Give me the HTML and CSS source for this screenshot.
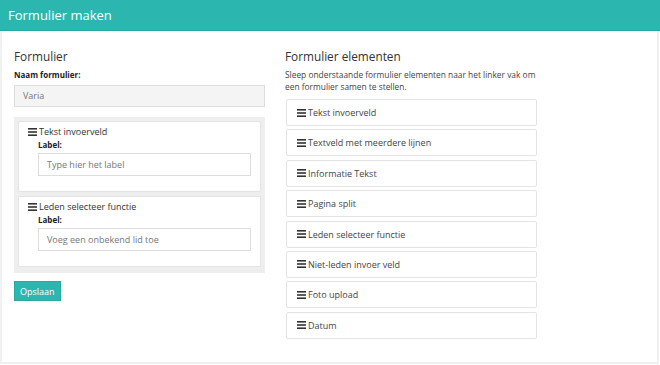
FILE: index.html
```html
<!DOCTYPE html>
<html lang="nl">
<head>
<meta charset="utf-8">
<title>Formulier maken</title>
<link rel="stylesheet" href="styles.css">
</head>
<body>
<header class="topbar">Formulier maken</header>
<main class="page">
  <section class="col">
    <h2 class="title">Formulier</h2>
    <label class="lbl">Naam formulier:</label>
    <div class="input input-gray">Varia</div>
    <div class="well">
      <div class="card">
        <div class="card-head"><svg class="bars" viewBox="0 0 9 8"><rect y="0" width="9" height="1.6"/><rect y="3.2" width="9" height="1.6"/><rect y="6.4" width="9" height="1.6"/></svg>Tekst invoerveld</div>
        <div class="card-body">
          <label class="lbl">Label:</label>
          <div class="input">Type hier het label</div>
        </div>
      </div>
      <div class="card">
        <div class="card-head"><svg class="bars" viewBox="0 0 9 8"><rect y="0" width="9" height="1.6"/><rect y="3.2" width="9" height="1.6"/><rect y="6.4" width="9" height="1.6"/></svg>Leden selecteer functie</div>
        <div class="card-body">
          <label class="lbl">Label:</label>
          <div class="input">Voeg een onbekend lid toe</div>
        </div>
      </div>
    </div>
    <button class="btn">Opslaan</button>
  </section>
  <section class="col">
    <h2 class="title">Formulier elementen</h2>
    <p class="desc">Sleep onderstaande formulier elementen naar het linker vak om een formulier samen te stellen.</p>
    <ul class="items">
      <li class="item"><svg class="bars" viewBox="0 0 9 8"><rect y="0" width="9" height="1.6"/><rect y="3.2" width="9" height="1.6"/><rect y="6.4" width="9" height="1.6"/></svg>Tekst invoerveld</li>
      <li class="item"><svg class="bars" viewBox="0 0 9 8"><rect y="0" width="9" height="1.6"/><rect y="3.2" width="9" height="1.6"/><rect y="6.4" width="9" height="1.6"/></svg>Textveld met meerdere lijnen</li>
      <li class="item"><svg class="bars" viewBox="0 0 9 8"><rect y="0" width="9" height="1.6"/><rect y="3.2" width="9" height="1.6"/><rect y="6.4" width="9" height="1.6"/></svg>Informatie Tekst</li>
      <li class="item"><svg class="bars" viewBox="0 0 9 8"><rect y="0" width="9" height="1.6"/><rect y="3.2" width="9" height="1.6"/><rect y="6.4" width="9" height="1.6"/></svg>Pagina split</li>
      <li class="item"><svg class="bars" viewBox="0 0 9 8"><rect y="0" width="9" height="1.6"/><rect y="3.2" width="9" height="1.6"/><rect y="6.4" width="9" height="1.6"/></svg>Leden selecteer functie</li>
      <li class="item"><svg class="bars" viewBox="0 0 9 8"><rect y="0" width="9" height="1.6"/><rect y="3.2" width="9" height="1.6"/><rect y="6.4" width="9" height="1.6"/></svg>Niet-leden invoer veld</li>
      <li class="item"><svg class="bars" viewBox="0 0 9 8"><rect y="0" width="9" height="1.6"/><rect y="3.2" width="9" height="1.6"/><rect y="6.4" width="9" height="1.6"/></svg>Foto upload</li>
      <li class="item"><svg class="bars" viewBox="0 0 9 8"><rect y="0" width="9" height="1.6"/><rect y="3.2" width="9" height="1.6"/><rect y="6.4" width="9" height="1.6"/></svg>Datum</li>
    </ul>
  </section>
</main>
</body>
</html>
```
FILE: styles.css
```css
* { box-sizing: border-box; }
html, body { margin: 0; padding: 0; background: #fff; }
body {
  font-family: "Open Sans", "Liberation Sans", sans-serif;
  color: #333;
  font-size: 9px;
  width: 660px;
  height: 365px;
}
.topbar {
  height: 31px;
  background: #2bb7af;
  border-bottom: 1px solid #27a8a0;
  color: #fff;
  font-size: 13px;
  line-height: 30px;
  padding-left: 8px;
}
.page {
  height: 333px;
  border: 2px solid #f0f0f0;
  border-top: none;
  margin-right: 1px;
  display: grid;
  grid-template-columns: 251px 252px;
  column-gap: 20px;
  padding: 0 0 0 12px;
}
.title {
  font-size: 11.8px;
  font-weight: 400;
  color: #333;
  margin: 16px 0 4px;
  line-height: 18px;
}
.lbl {
  display: block;
  font-weight: 700;
  font-size: 8px;
  line-height: 12px;
  color: #222;
  margin-bottom: 4px;
}
.input {
  height: 22px;
  border: 1px solid #ddd;
  background: #fff;
  color: #777;
  font-size: 9px;
  line-height: 20px;
  padding: 0 8px;
}
.input-gray { background: #f4f4f4; }
.well {
  margin-top: 10px;
  background: #eee;
  padding: 4px 4px 6px;
  display: flex;
  flex-direction: column;
  gap: 4px;
}
.card {
  background: #fff;
  border: 1px solid #e4e4e4;
  border-radius: 2px;
  padding: 3px 9px 15px;
}
.card-head {
  font-size: 9px;
  line-height: 14px;
  display: flex;
  align-items: center;
  color: #333;
}
.card-body { padding-left: 10px; }
.card-body .lbl { margin: 0 0 2px; }
.card-body .input { height: 23px; line-height: 21px; }
.bars {
  width: 9px;
  height: 8px;
  margin-right: 2px;
  fill: #333;
  flex: none;
}
.btn {
  display: block;
  margin-top: 8px;
  background: #2bb7af;
  color: #fff;
  border: 1px solid #27aaa2;
  font-family: inherit;
  font-size: 9px;
  height: 20px;
  padding: 0 5px;
  cursor: pointer;
}
.desc {
  margin: 0 0 6px;
  font-size: 8.4px;
  line-height: 12px;
  color: #444;
}
.items {
  list-style: none;
  margin: 0;
  padding: 0;
  display: flex;
  flex-direction: column;
  gap: 3.4px;
}
.item {
  height: 27px;
  border: 1px solid #e4e4e4;
  border-radius: 2px;
  padding: 0 10px;
  display: flex;
  align-items: center;
  font-size: 9px;
  color: #444;
  margin-left: 1px;
}
```
